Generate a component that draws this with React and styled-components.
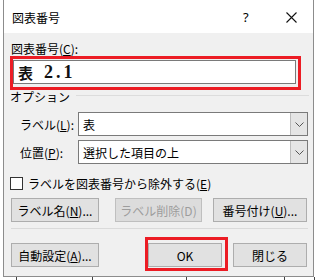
import React from 'react';
import styled, { createGlobalStyle } from 'styled-components';

const GlobalStyle = createGlobalStyle`
  html, body {
    margin: 0;
    padding: 0;
    background: #ffffff;
  }
  body {
    font-family: "Noto Sans CJK JP", "Noto Sans", sans-serif;
    font-size: 12px;
    color: #000;
  }
`;

function App() {
  return (
    <Page>
      <GlobalStyle />
      <Dialog>
        <TitleBar>
          <Title>図表番号</Title>
          <Help>?</Help>
          <CloseIcon width="11" height="11" viewBox="0 0 11 11">
            <path d="M0.5 0.5 L10.5 10.5 M10.5 0.5 L0.5 10.5" stroke="#111" strokeWidth="1.1" fill="none" />
          </CloseIcon>
        </TitleBar>

        <Body>
          <FieldLabel>図表番号(<u>C</u>):</FieldLabel>
          <RedFrame $width={291} $margin="0 0 0 -1px" $pad="1px 2px 3px 0">
            <CaptionInput>
              <CaptionKanji>表</CaptionKanji>
              <CaptionNumber>2.1</CaptionNumber>
            </CaptionInput>
          </RedFrame>

          <GroupHeader>
            <span>オプション</span>
            <GroupLine />
          </GroupHeader>

          <FormRow $top={8}>
            <RowLabel>ラベル(<u>L</u>):</RowLabel>
            <Combo>
              <ComboText>表</ComboText>
              <ComboButton><Chevron /></ComboButton>
            </Combo>
          </FormRow>
          <FormRow $top={4}>
            <RowLabel>位置(<u>P</u>):</RowLabel>
            <Combo>
              <ComboText>選択した項目の上</ComboText>
              <ComboButton><Chevron /></ComboButton>
            </Combo>
          </FormRow>

          <CheckRow>
            <CheckBox />
            <span>ラベルを図表番号から除外する(<u>E</u>)</span>
          </CheckRow>

          <ButtonRow $top={8}>
            <Button $width={88}>ラベル名(<u>N</u>)...</Button>
            <Button $width={87} $gap={16} disabled>ラベル削除(D)</Button>
            <Button $width={94} $gap={11}>番号付け(<u>U</u>)...</Button>
          </ButtonRow>

          <Separator />

          <ButtonRow $top={8}>
            <Button $width={88} $offset={6}>自動設定(<u>A</u>)...</Button>
            <RedFrame $width={83} $margin="0 0 0 46px" $pad="3px 3px 1px 0">
              <Button $width={74}>OK</Button>
            </RedFrame>
            <Button $width={74} $gap={5} $offset={6}>閉じる</Button>
          </ButtonRow>
        </Body>
      </Dialog>
      <DocStrip>
        <DocCell $width={14} />
        <DocCell $width={76} />
        <DocCell $width={94} />
        <DocCell $width={98} />
        <DocCell $width={30} />
      </DocStrip>
    </Page>
  );
}

function Chevron() {
  return (
    <svg width="9" height="5" viewBox="0 0 9 5">
      <path d="M0.5 0.5 L4.5 4.5 L8.5 0.5" stroke="#555" strokeWidth="1" fill="none" />
    </svg>
  );
}

export default App;

const Page = styled.div`
  width: 320px;
  height: 280px;
  overflow: hidden;
  background: #fff;
`;

const Dialog = styled.div`
  width: 311px;
  margin-left: 3px;
  box-sizing: border-box;
  border: 1px solid #8c8c8c;
  border-top: none;
  background: #f0f0f0;
`;

const TitleBar = styled.div`
  height: 33px;
  background: #ffffff;
  display: flex;
  align-items: center;
  padding: 0 0 0 8px;
`;

const Title = styled.div`
  font-size: 12px;
  flex: 1;
  padding-top: 1px;
`;

const Help = styled.div`
  font-family: "Noto Sans", sans-serif;
  font-size: 13px;
  width: 10px;
  margin-right: 33px;
  padding-top: 1px;
`;

const CloseIcon = styled.svg`
  margin-right: 16px;
  margin-top: 1px;
`;

const Body = styled.div`
  padding: 9px 5px 5px 7px;
  u {
    text-decoration: underline;
    text-underline-offset: 1px;
  }
`;

const FieldLabel = styled.div`
  line-height: 14px;
  height: 14px;
`;

const RedFrame = styled.div`
  width: ${p => p.$width}px;
  margin: ${p => p.$margin};
  padding: ${p => p.$pad};
  box-sizing: border-box;
  border: 3px solid #ec1c24;
  display: flex;
`;

const CaptionInput = styled.div`
  flex: 1;
  height: 24px;
  box-sizing: border-box;
  border: 1px solid #7a7a7a;
  background: #fff;
  display: flex;
  align-items: center;
  padding-left: 4px;
`;

const CaptionKanji = styled.span`
  font-family: "Noto Sans CJK JP", sans-serif;
  font-weight: 700;
  font-size: 15px;
  color: #111;
`;

const CaptionNumber = styled.span`
  font-family: "Liberation Serif", serif;
  font-weight: 700;
  font-size: 18px;
  letter-spacing: 3px;
  margin-left: 11px;
  color: #111;
`;

const GroupHeader = styled.div`
  display: flex;
  align-items: flex-start;
  height: 14px;
  line-height: 14px;
  margin-left: -1px;
`;

const GroupLine = styled.div`
  flex: 1;
  height: 1px;
  background: #dcdcdc;
  margin: 5px 0 0 6px;
  margin-right: -1px;
`;

const FormRow = styled.div`
  display: flex;
  align-items: center;
  margin-top: ${p => p.$top}px;
  height: 24px;
`;

const RowLabel = styled.div`
  width: 58px;
  padding-left: 9px;
`;

const Combo = styled.div`
  flex: 1;
  height: 24px;
  box-sizing: border-box;
  border: 1px solid #7a7a7a;
  background: #fff;
  display: flex;
`;

const ComboText = styled.div`
  flex: 1;
  display: flex;
  align-items: center;
  padding-left: 4px;
`;

const ComboButton = styled.div`
  width: 16px;
  background: #e5e5e5;
  border-left: 1px solid #bcbcbc;
  display: flex;
  align-items: center;
  justify-content: center;
`;

const CheckRow = styled.div`
  display: flex;
  align-items: center;
  gap: 5px;
  margin: 13px 0 0 -1px;
  height: 13px;
`;

const CheckBox = styled.div`
  width: 13px;
  height: 13px;
  box-sizing: border-box;
  border: 1px solid #333;
  background: #fff;
`;

const ButtonRow = styled.div`
  display: flex;
  align-items: flex-start;
  margin-top: ${p => p.$top}px;
`;

const Button = styled.button`
  width: ${p => p.$width}px;
  height: 24px;
  margin-left: ${p => p.$gap || 0}px;
  margin-top: ${p => p.$offset || 0}px;
  box-sizing: border-box;
  border: 1px solid #adadad;
  background: #e1e1e1;
  font-family: inherit;
  font-size: 12px;
  color: #000;
  padding: 0;
  white-space: nowrap;

  &:disabled {
    color: #9d9d9d;
    border-color: #bfbfbf;
    background: #dcdcdc;
  }
`;

const Separator = styled.div`
  height: 1px;
  background: #dadada;
  margin-top: 6px;
`;

const DocStrip = styled.div`
  display: flex;
  height: 8px;
  margin-left: 3px;
  overflow: hidden;
`;

const DocCell = styled.div`
  width: ${p => p.$width}px;
  border-right: 1px solid #444;
  box-sizing: border-box;
`;
